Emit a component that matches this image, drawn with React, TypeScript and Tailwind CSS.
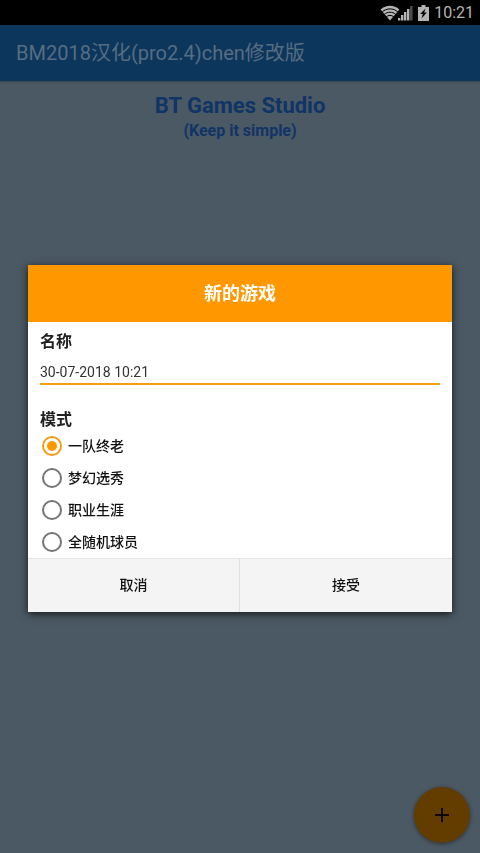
import React, { useState } from 'react';

const MODES = [
    { id: 'one-team', label: '一队终老' },
    { id: 'fantasy', label: '梦幻选秀' },
    { id: 'career', label: '职业生涯' },
    { id: 'random', label: '全随机球员' },
];

function StatusBar() {
    return (
        <div className="flex h-[25px] items-center justify-end bg-black pr-[6px] text-[#b4b4b4]">
            {/* wifi */}
            <svg width="20" height="16" viewBox="0 0 20 16" aria-hidden="true">
                <path d="M10 15.5L0.6 4.6C6 -0.4 14 -0.4 19.4 4.6Z" fill="currentColor" />
                <g fill="none" stroke="#000" strokeWidth="1">
                    <path d="M2.2 6.9C6.8 2.9 13.2 2.9 17.8 6.9" />
                    <path d="M4.2 9.4C7.6 6.5 12.4 6.5 15.8 9.4" />
                    <path d="M6.2 11.8C8.4 9.9 11.6 9.9 13.8 11.8" />
                </g>
            </svg>
            {/* mobile signal */}
            <svg className="-ml-[2px]" width="16" height="16" viewBox="0 0 16 16" fill="currentColor" aria-hidden="true">
                <path d="M0 13h2.4v2.5H0zM3 10h2.4v5.5H3zM6 7h2.4v8.5H6zM9 4h2.4v11.5H9z" />
                <path d="M12 1h2.6v14.5H12z" fill="#4a4a4a" />
            </svg>
            {/* charging battery */}
            <svg className="ml-1" width="11" height="16" viewBox="0 0 11 16" aria-hidden="true">
                <path d="M3.5 0h4v2H11v14H0V2h3.5z" fill="currentColor" />
                <path d="M7.5 3.5L2.2 9h2.6L3.6 13.5L8.8 7.4H6.2z" fill="#000" />
            </svg>
            <span className="ml-[5px] text-[16px] leading-[25px]">10:21</span>
        </div>
    );
}

export default function App() {
    const [name, setName] = useState('30-07-2018 10:21');
    const [mode, setMode] = useState('one-team');

    return (
        <div className="flex min-h-screen flex-col bg-[#4b5964] font-[Roboto,'Noto_Sans_CJK_SC',sans-serif]">
            <StatusBar />

            <header className="flex h-14 items-center bg-[#0d365c] px-4 shadow-[0_1px_2px_rgba(0,0,0,0.25)]">
                <h1 className="text-[20px] leading-7 text-[#566d82]">BM2018汉化(pro2.4)chen修改版</h1>
            </header>

            <main className="pt-[11px] text-center font-bold text-[#113466]">
                <h2 className="text-[22px] leading-7">BT Games Studio</h2>
                <p className="text-[16px] leading-[22px]">(Keep it simple)</p>
            </main>

            <button
                type="button"
                aria-label="+"
                className="fixed right-[10px] bottom-[10px] flex size-14 items-center justify-center rounded-full bg-[#633c00] shadow-[0_1px_4px_rgba(0,0,0,0.45)]"
            >
                <svg width="14" height="14" viewBox="0 0 14 14" stroke="#100900" strokeWidth="2" aria-hidden="true">
                    <path d="M7 0v14M0 7h14" />
                </svg>
            </button>

            <div className="fixed inset-x-0 top-6 bottom-0 flex items-center justify-center px-7">
                <form
                    role="dialog"
                    aria-labelledby="dialog-title"
                    onSubmit={(e) => e.preventDefault()}
                    className="w-full bg-white shadow-[0_2px_8px_rgba(0,0,0,0.75)]"
                >
                    <h2 id="dialog-title" className="bg-[#ff9800] text-center text-[18px] leading-[57px] font-bold text-white">
                        新的游戏
                    </h2>

                    <div className="px-3 pt-2">
                        <label htmlFor="name" className="block text-[16px] leading-6 font-bold text-[#212121]">
                            名称
                        </label>
                        <input
                            id="name"
                            type="text"
                            value={name}
                            onChange={(e) => setName(e.target.value)}
                            className="mt-1 block h-[27px] w-full border-b-2 border-[#f59b14] pt-[3px] text-[14px] text-[#333333] outline-none"
                        />

                        <fieldset className="mt-[25px]">
                            <legend className="text-[16px] leading-5 font-bold text-[#212121]">模式</legend>
                            {MODES.map((m) => (
                                <label key={m.id} className="flex h-8 items-center gap-[6px] pl-[2px] text-[14px] font-medium text-[#111111]">
                                    <input
                                        type="radio"
                                        name="mode"
                                        value={m.id}
                                        checked={mode === m.id}
                                        onChange={() => setMode(m.id)}
                                        className="size-5 appearance-none rounded-full border-2 border-[#757575] bg-white checked:border-[#f59b14] checked:bg-[#ff9800] checked:bg-clip-content checked:p-[3px]"
                                    />
                                    {m.label}
                                </label>
                            ))}
                        </fieldset>
                    </div>

                    <div className="grid grid-cols-2 border-t border-[#e4e4e4] bg-[#f4f4f4] text-[14px] leading-[53px] font-medium text-[#111111]">
                        <button type="button" className="border-r border-[#e0e0e0]">取消</button>
                        <button type="submit">接受</button>
                    </div>
                </form>
            </div>
        </div>
    );
}
